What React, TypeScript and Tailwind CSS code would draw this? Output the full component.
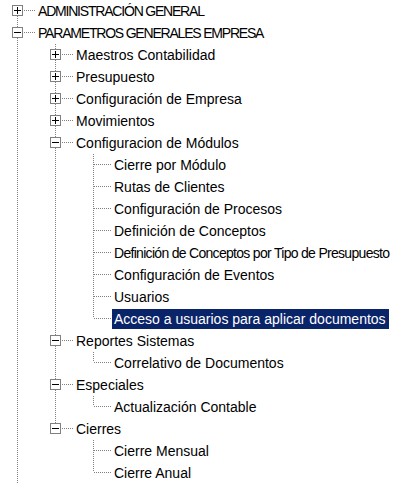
import React from "react";

type Node = {
  label: string;
  children?: Node[];
  expanded?: boolean;
  selected?: boolean;
  caps?: boolean;
  tight?: boolean;
};

const tree: Node[] = [
  { label: "ADMINISTRACIÓN GENERAL", children: [{ label: "x" }], expanded: false, caps: true },
  {
    label: "PARAMETROS GENERALES EMPRESA",
    caps: true,
    expanded: true,
    children: [
      { label: "Maestros Contabilidad", children: [{ label: "x" }] },
      { label: "Presupuesto", children: [{ label: "x" }] },
      { label: "Configuración de Empresa", children: [{ label: "x" }] },
      { label: "Movimientos", children: [{ label: "x" }] },
      {
        label: "Configuracion de Módulos",
        expanded: true,
        children: [
          { label: "Cierre por Módulo" },
          { label: "Rutas de Clientes" },
          { label: "Configuración de Procesos" },
          { label: "Definición de Conceptos" },
          { label: "Definición de Conceptos por Tipo de Presupuesto", tight: true },
          { label: "Configuración de Eventos" },
          { label: "Usuarios" },
          { label: "Acceso a usuarios para aplicar documentos", selected: true },
        ],
      },
      {
        label: "Reportes Sistemas",
        expanded: true,
        children: [{ label: "Correlativo de Documentos" }],
      },
      {
        label: "Especiales",
        expanded: true,
        children: [{ label: "Actualización Contable" }],
      },
      {
        label: "Cierres",
        expanded: true,
        children: [{ label: "Cierre Mensual" }, { label: "Cierre Anual" }],
      },
    ],
  },
];

const LINE = "#808080";

function Guide({ on }: { on: boolean }) {
  return (
    <svg width="38" height="22" className="shrink-0 block">
      {on && <line x1="17.5" y1="0" x2="17.5" y2="22" stroke={LINE} strokeDasharray="1 1" />}
    </svg>
  );
}

function Connector({
  top,
  bottom,
  box,
  expanded,
}: {
  top: boolean;
  bottom: boolean;
  box: boolean;
  expanded: boolean;
}) {
  return (
    <svg width="36" height="22" className="shrink-0 block">
      {top && <line x1="17.5" y1="0" x2="17.5" y2="10" stroke={LINE} strokeDasharray="1 1" />}
      {bottom && <line x1="17.5" y1="10" x2="17.5" y2="22" stroke={LINE} strokeDasharray="1 1" />}
      <line x1="18" y1="10.5" x2="36" y2="10.5" stroke={LINE} strokeDasharray="1 1" />
      {box && (
        <g>
          <rect x="12.5" y="5.5" width="10" height="10" fill="#fff" stroke={LINE} />
          <line x1="14" y1="10.5" x2="21" y2="10.5" stroke="#000" />
          {!expanded && <line x1="17.5" y1="7" x2="17.5" y2="14" stroke="#000" />}
        </g>
      )}
    </svg>
  );
}

type RowProps = {
  node: Node;
  guides: boolean[];
  isLast: boolean;
  isFirstRoot: boolean;
};

function Row({ node, guides, isLast, isFirstRoot }: RowProps) {
  const hasChildren = !!node.children && node.children.length > 0;
  return (
    <div className="flex items-center h-[22px]">
      {guides.map((g, i) => (
        <Guide key={i} on={g} />
      ))}
      <Connector top={!isFirstRoot} bottom={!isLast} box={hasChildren} expanded={!!node.expanded} />
      <span
        className={
          "whitespace-nowrap h-[20px] leading-[20px] pl-[2px] pr-[3px] text-[14px] " +
          (node.caps ? "tracking-[-1.2px] " : "") +
          (node.tight ? "tracking-[-0.7px] " : "") +
          (node.selected ? "bg-[#0a246a] text-white" : "text-black")
        }
      >
        {node.label}
      </span>
    </div>
  );
}

function renderNodes(nodes: Node[], guides: boolean[], root: boolean): React.ReactNode[] {
  const out: React.ReactNode[] = [];
  nodes.forEach((n, i) => {
    const isLast = root ? false : i === nodes.length - 1;
    out.push(
      <Row key={guides.length + "-" + i + n.label} node={n} guides={guides} isLast={isLast} isFirstRoot={root && i === 0} />
    );
    if (n.children && n.expanded) {
      out.push(...renderNodes(n.children, [...guides, !isLast], false));
    }
  });
  return out;
}

export default function App() {
  return (
    <div className="flex flex-col w-[414px] h-[484px] overflow-hidden bg-white font-['Liberation_Sans',Arial,sans-serif]">
      {renderNodes(tree, [], true)}
    </div>
  );
}
